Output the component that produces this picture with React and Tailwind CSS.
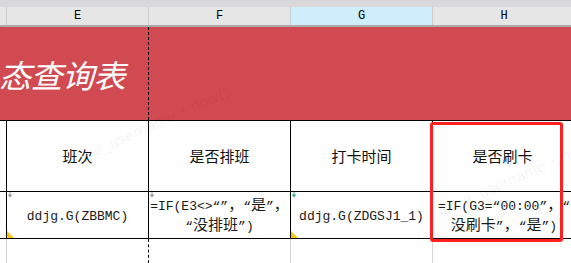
export default function App() {
  const cjk = "font-['Noto_Sans_CJK_SC',sans-serif]";
  const C = ({ children }) => (
    <span className="text-[15px] font-['Noto_Sans_CJK_SC',sans-serif]">{children}</span>
  );
  return (
    <div className="relative w-[571px] h-[263px] overflow-hidden bg-white">
      <div className="h-[7px] bg-[#d9d9db]" />
      {/* column header */}
      <div className="flex h-[20px] bg-[#e6e6e6] border-b-2 border-[#aaaaaa] font-['Liberation_Mono',monospace] text-[12px] text-black">
        <div className="w-[7px] shrink-0 border-r border-[#cccccc]" />
        <div className="w-[142px] shrink-0 border-r border-[#cccccc] flex items-center justify-center">E</div>
        <div className="w-[142px] shrink-0 border-r border-[#cccccc] flex items-center justify-center">F</div>
        <div className="w-[142px] shrink-0 border-r border-[#cccccc] bg-[#cdeefa] flex items-center justify-center">G</div>
        <div className="w-[142px] shrink-0 flex items-center justify-center">H</div>
      </div>
      {/* red title band */}
      <div className="relative h-[93px] bg-[#d14a51] flex items-center">
        <div className={`${cjk} italic text-white text-[32px] leading-none ml-[-1px] tracking-[-0.5px]`}>态查询表</div>
        <div className="absolute left-[148px] top-0 h-full border-l-[1.5px] border-dashed border-black" />
      </div>
      {/* header row */}
      <div className={`flex h-[71px] border-t border-black ${cjk} text-[15px] text-[#111]`}>
        <div className="w-[7px] shrink-0 border-r border-black" />
        <div className="w-[142px] shrink-0 border-r border-black flex items-center justify-center">班次</div>
        <div className="w-[142px] shrink-0 border-r border-black flex items-center justify-center">是否排班</div>
        <div className="w-[142px] shrink-0 border-r border-black flex items-center justify-center">打卡时间</div>
        <div className="w-[142px] shrink-0 flex items-center justify-center pr-[3px]">是否刷卡</div>
      </div>
      {/* data row */}
      <div className="flex h-[48px] border-t border-b border-black font-['Liberation_Mono','Noto_Sans_CJK_SC',monospace] text-[13px] text-[#1a1a1a] leading-[17px]">
        <div className="w-[7px] shrink-0 border-r border-black" />
        <div className="relative w-[142px] shrink-0 border-r border-black flex items-center justify-center pt-[2px]">
          ddjg.G(ZBBMC)
        </div>
        <div className="relative w-[142px] shrink-0 border-r border-black flex items-center justify-center text-center whitespace-nowrap">
          <div>
            =IF(E3&lt;&gt;“”<C>，</C>“<C>是</C>”<C>，</C>
            <br />
            “<C>没排班</C>”)
          </div>
        </div>
        <div className="relative w-[142px] shrink-0 border-r border-black flex items-center justify-center pt-[2px]">
          ddjg.G(ZDGSJ1_1)
        </div>
        <div className="relative w-[142px] shrink-0 flex items-center justify-center text-center whitespace-nowrap">
          <div>
            =IF(G3=“00:00”<C>，</C>“
            <br />
            <C>没刷卡</C>”<C>，</C>“<C>是</C>”)
          </div>
        </div>
      </div>
      {/* empty row */}
      <div className="flex h-[40px]">
        <div className="w-[7px] shrink-0 border-r border-[#d4d4d4]" />
        <div className="w-[142px] shrink-0 border-r border-dashed border-black" />
        <div className="w-[142px] shrink-0 border-r border-[#d4d4d4]" />
        <div className="w-[142px] shrink-0 border-r border-[#d4d4d4]" />
        <div className="w-[142px] shrink-0" />
      </div>

      {/* cell markers */}
      <svg className="absolute left-[7px] top-[192px]" width="6" height="6" viewBox="0 0 6 6">
        <path d="M3 0 V4" stroke="#9a9a9a" strokeWidth="1" />
        <path d="M0.5 2.5 L3 5.5 L5.5 2.5 Z" fill="#9a9a9a" />
      </svg>
      <svg className="absolute left-[149px] top-[192px]" width="6" height="6" viewBox="0 0 6 6">
        <path d="M3 0 V4" stroke="#9a9a9a" strokeWidth="1" />
        <path d="M0.5 2.5 L3 5.5 L5.5 2.5 Z" fill="#9a9a9a" />
      </svg>
      <svg className="absolute left-[291px] top-[192px]" width="6" height="6" viewBox="0 0 6 6">
        <path d="M3 0 V4" stroke="#3aa59a" strokeWidth="1" />
        <path d="M0.5 2.5 L3 5.5 L5.5 2.5 Z" fill="#3aa59a" />
      </svg>
      <svg className="absolute left-[7px] top-[231px]" width="7" height="7" viewBox="0 0 7 7">
        <path d="M0 0 L7 7 L0 7 Z" fill="#f5c518" />
      </svg>
      <svg className="absolute left-[291px] top-[231px]" width="7" height="7" viewBox="0 0 7 7">
        <path d="M0 0 L7 7 L0 7 Z" fill="#f5c518" />
      </svg>

      {/* faint watermark */}
      <div className="pointer-events-none absolute left-[70px] top-[150px] -rotate-[24deg] origin-left font-['Liberation_Sans',sans-serif] text-[16px] text-black/[0.06] whitespace-nowrap">
        $fine_username + now()
      </div>
      <div className="pointer-events-none absolute left-[440px] top-[200px] -rotate-[24deg] origin-left font-['Liberation_Sans',sans-serif] text-[16px] text-black/[0.06] whitespace-nowrap">
        $fine_username + now()
      </div>

      {/* red highlight box */}
      <div className="absolute left-[430px] top-[122px] w-[133px] h-[120px] border-[3px] border-[#ff2121] rounded-[3px]" />
    </div>
  );
}
